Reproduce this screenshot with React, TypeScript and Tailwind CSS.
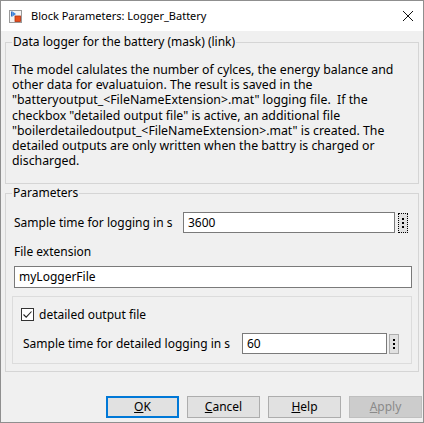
import React from 'react';

const FONT = { fontFamily: '"Noto Sans", "Liberation Sans", Arial, sans-serif' };

const descLines = [
    'The model calulates the number of cylces, the energy balance and',
    'other data for evaluatuion. The result is saved in the',
    '"batteryoutput_<FileNameExtension>.mat" logging file.  If the',
    'checkbox "detailed output file" is active, an additional file',
    '"boilerdetailedoutput_<FileNameExtension>.mat" is created. The',
    'detailed outputs are only written when the battry is charged or',
    'discharged.',
];

const BlockIcon = () => (
    <svg width="13" height="13" viewBox="0 0 13 13">
        <rect x="0.5" y="0.5" width="12" height="12" fill="#f4f4f4" stroke="#9a9a9a" />
        <rect x="2" y="1.5" width="1.5" height="5" fill="#2f6fc4" />
        <path d="M3.5 1.5 L7 4 L3.5 6.5 Z" fill="#3d86e0" />
        <rect x="6" y="6" width="5.5" height="5.5" fill="#e8501c" stroke="#b03010" strokeWidth="0.8" />
    </svg>
);

const DotsButton = ({ focused }: { focused?: boolean }) => (
    <button
        className={`w-[10px] h-[20px] flex flex-col items-center justify-center gap-[2px] bg-[#e1e1e1] ${focused ? 'border border-dotted border-black' : 'border border-[#adadad]'}`}
    >
        <span className="w-[2px] h-[2px] bg-black" />
        <span className="w-[2px] h-[2px] bg-black" />
        <span className="w-[2px] h-[2px] bg-black" />
    </button>
);

const DlgButton = ({ label, rest, primary, disabled }: { label: string; rest: string; primary?: boolean; disabled?: boolean }) => (
    <button
        className={`w-[73px] h-[22px] flex items-center justify-center text-[12px] leading-[16px] ${primary ? 'border-2 border-[#0078d7] bg-[#e1e1e1] text-black' : disabled ? 'border border-[#bfbfbf] bg-[#cccccc] text-[#8a8a8a]' : 'border border-[#adadad] bg-[#e1e1e1] text-black'}`}
    >
        <span><span className="underline">{label}</span>{rest}</span>
    </button>
);

export default function App() {
    return (
        <div className="w-[424px] h-[423px] border border-[#8f8f8f] bg-[#f0f0f0] flex flex-col text-black text-[12px]" style={FONT}>
            {/* title bar */}
            <div className="h-[30px] shrink-0 bg-white flex items-center pl-[8px] pr-[9px]">
                <BlockIcon />
                <span className="ml-[9px] text-[11px] leading-[16px]">Block Parameters: Logger_Battery</span>
                <svg className="ml-auto" width="12" height="12" viewBox="0 0 12 12">
                    <path d="M1 1 L11 11 M11 1 L1 11" stroke="#111" strokeWidth="1" />
                </svg>
            </div>

            <div className="flex-1 flex flex-col pt-[3px]">
                {/* description group */}
                <fieldset className="shrink-0 mx-[4px] border border-[#d5d5d5] pl-[6px] pr-[6px] pb-[15px]">
                    <legend className="px-[1px] leading-[16px]">Data logger for the battery (mask) (link)</legend>
                    <div className="pt-[12px] whitespace-pre text-[12.3px]">
                        {descLines.map((l, i) => (
                            <div key={i} className="h-[15.2px] leading-[15.2px]">{l}</div>
                        ))}
                    </div>
                </fieldset>

                {/* parameters group */}
                <fieldset className="shrink-0 mt-[1px] mx-[4px] border border-[#d5d5d5] pl-[6px] pr-[6px] pb-[7px]">
                    <legend className="px-[1px] leading-[16px]">Parameters</legend>
                    <div className="pt-[11px] pl-[2px] flex items-center">
                        <span className="w-[169px] leading-[16px]">Sample time for logging in s</span>
                        <div className="w-[212px] h-[21px] border border-[#7a7a7a] bg-white flex items-center pl-[4px] leading-[16px]">3600</div>
                        <div className="ml-[3px]"><DotsButton focused /></div>
                    </div>
                    <div className="mt-[11px] pl-[2px] h-[16px] leading-[16px]">File extension</div>
                    <div className="mt-[6px] ml-[2px] h-[22px] border border-[#7a7a7a] bg-white flex items-center pl-[4px] leading-[16px]">myLoggerFile</div>

                    <div className="mt-[8px] border border-[#dcdcdc] pl-[8px] pr-[12px] pt-[11px] pb-[9px]">
                        <div className="h-[13px] flex items-center">
                            <span className="w-[13px] h-[13px] border border-[#333333] bg-white flex items-center justify-center">
                                <svg width="11" height="11" viewBox="0 0 11 11">
                                    <path d="M1.5 5.5 L4.2 8.2 L9.5 2.5" fill="none" stroke="#222" strokeWidth="1.1" />
                                </svg>
                            </span>
                            <span className="ml-[5px] leading-[16px]">detailed output file</span>
                        </div>
                        <div className="mt-[12px] pl-[2px] flex items-center">
                            <span className="w-[219px] leading-[16px]">Sample time for detailed logging in s</span>
                            <div className="w-[145px] h-[21px] border border-[#7a7a7a] bg-white flex items-center pl-[4px] leading-[16px]">60</div>
                            <div className="ml-[2px]"><DotsButton /></div>
                        </div>
                    </div>
                </fieldset>

                {/* dialog buttons */}
                <div className="mt-auto pb-[4px] pr-[1px] flex justify-end gap-[8px]">
                    <DlgButton label="O" rest="K" primary />
                    <DlgButton label="C" rest="ancel" />
                    <DlgButton label="H" rest="elp" />
                    <DlgButton label="A" rest="pply" disabled />
                </div>
            </div>
        </div>
    );
}
